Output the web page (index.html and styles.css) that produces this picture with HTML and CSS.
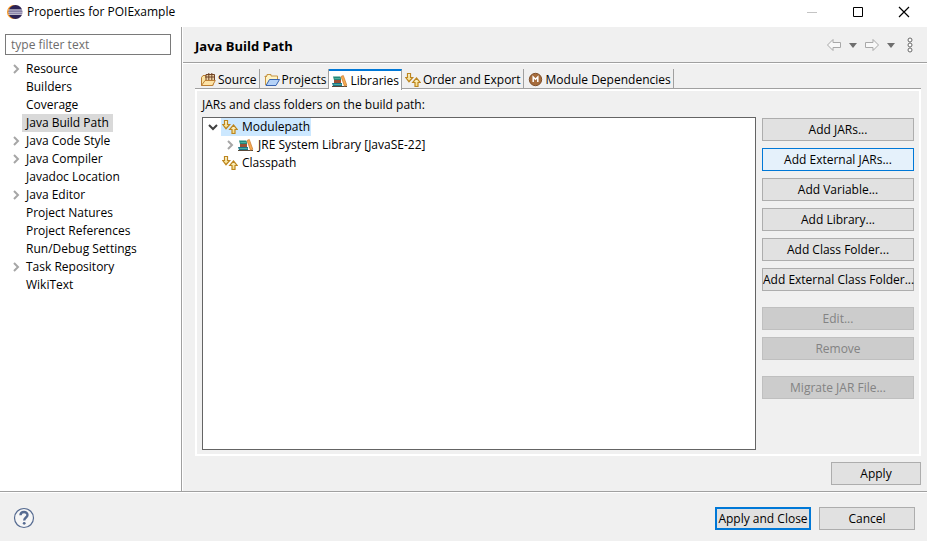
FILE: index.html
```html
<!DOCTYPE html>
<html lang="en">
<head>
    <meta charset="UTF-8">
    <meta name="viewport" content="width=device-width, initial-scale=1.0">
    <title>Properties for POIExample</title>
    <link rel="stylesheet" href="styles.css">
</head>
<body>

<!-- shared icons -->
<svg class="sprite" aria-hidden="true">
    <defs>
        <linearGradient id="gold" x1="0" y1="0" x2="0" y2="1">
            <stop offset="0" stop-color="#fffbe0"/>
            <stop offset="1" stop-color="#f5d878"/>
        </linearGradient>
    </defs>
    <symbol id="chevron" viewBox="0 0 8 10">
        <path d="M2 1 L6 5 L2 9" fill="none" stroke="#a6a6a6" stroke-width="2"/>
    </symbol>
    <symbol id="chevron-open" viewBox="0 0 10 8">
        <path d="M1 2 L5 6 L9 2" fill="none" stroke="#404040" stroke-width="2"/>
    </symbol>
    <symbol id="path-arrows" viewBox="0 0 16 16">
        <path d="M2.5 1.5 H5.5 V5.5 H7.7 L4 9.7 L0.7 5.5 H2.5 Z" fill="url(#gold)" stroke="#bd8620" stroke-width="1.2"/>
        <path d="M11.5 6 L15.3 10.5 H13 V14.5 H10 V10.5 H7.7 Z" fill="url(#gold)" stroke="#bd8620" stroke-width="1.2"/>
    </symbol>
    <symbol id="books" viewBox="0 0 16 16">
        <path d="M1 3.5 H8 L9 4.5 V7 H2 Z" fill="#23877a"/>
        <path d="M2 7 H9 V10 H2 Z" fill="#9c5034"/>
        <path d="M0 10 H10 V13 H1 Z" fill="#1b7589"/>
        <path d="M2.5 5.5 H8.5 M1.5 11.5 H9.5" stroke="#4fae9d"/>
        <path d="M0 13.5 H15" stroke="#574838"/>
        <path d="M9 3.5 L11.3 2.5 L14.8 12.3 L12.5 13.2 Z" fill="#f6ac52" stroke="#c7772b" stroke-width=".7"/>
    </symbol>
</svg>

<header class="titlebar">
    <svg class="logo" viewBox="0 0 16 16">
        <circle cx="7" cy="8" r="7" fill="#f7941e"/>
        <circle cx="8.5" cy="8" r="7" fill="#2c2255"/>
        <path d="M1.5 6 H15.5 M1.3 8.2 H15.7 M1.5 10.2 H15.5" stroke="#fff" stroke-width="1"/>
        <path d="M2 7 H15 M2 9.2 H15" stroke="#9c95bd" stroke-width="1"/>
    </svg>
    <h1 class="window-title">Properties for POIExample</h1>
    <div class="window-buttons">
        <button class="window-button" aria-label="Minimize">
            <svg viewBox="0 0 12 12"><path d="M1 6.5 H11" stroke="#c4c4c4"/></svg>
        </button>
        <button class="window-button" aria-label="Maximize">
            <svg viewBox="0 0 12 12"><path d="M1.5 1.5 H10.5 V10.5 H1.5 Z" fill="none" stroke="#000"/></svg>
        </button>
        <button class="window-button" aria-label="Close">
            <svg viewBox="0 0 12 12"><path d="M1 1 L11 11 M11 1 L1 11" stroke="#000" stroke-width="1.2"/></svg>
        </button>
    </div>
</header>

<div class="main">
    <nav class="sidebar">
        <input class="filter" type="text" placeholder="type filter text" aria-label="Filter">
        <ul class="categories">
            <li class="category"><svg class="chevron"><use href="#chevron"/></svg><span class="name">Resource</span></li>
            <li class="category"><span class="chevron"></span><span class="name">Builders</span></li>
            <li class="category"><span class="chevron"></span><span class="name">Coverage</span></li>
            <li class="category"><span class="chevron"></span><span class="name active">Java Build Path</span></li>
            <li class="category"><svg class="chevron"><use href="#chevron"/></svg><span class="name">Java Code Style</span></li>
            <li class="category"><svg class="chevron"><use href="#chevron"/></svg><span class="name">Java Compiler</span></li>
            <li class="category"><span class="chevron"></span><span class="name">Javadoc Location</span></li>
            <li class="category"><svg class="chevron"><use href="#chevron"/></svg><span class="name">Java Editor</span></li>
            <li class="category"><span class="chevron"></span><span class="name">Project Natures</span></li>
            <li class="category"><span class="chevron"></span><span class="name">Project References</span></li>
            <li class="category"><span class="chevron"></span><span class="name">Run/Debug Settings</span></li>
            <li class="category"><svg class="chevron"><use href="#chevron"/></svg><span class="name">Task Repository</span></li>
            <li class="category"><span class="chevron"></span><span class="name">WikiText</span></li>
        </ul>
    </nav>

    <main class="page">
        <div class="page-header">
            <h2 class="page-title">Java Build Path</h2>
            <div class="history">
                <button class="tool" aria-label="Back">
                    <svg width="16" height="14" viewBox="0 0 16 14"><path d="M1.5 7 L7 1.5 V4.5 H14.5 V9.5 H7 V12.5 Z" fill="#f8f8f8" stroke="#a8a8a8"/></svg>
                </button>
                <button class="tool" aria-label="Back history">
                    <svg width="8" height="5" viewBox="0 0 8 5"><path d="M0 0 H8 L4 5 Z" fill="#6e6e6e"/></svg>
                </button>
                <button class="tool" aria-label="Forward">
                    <svg width="16" height="14" viewBox="0 0 16 14"><path d="M14.5 7 L9 1.5 V4.5 H1.5 V9.5 H9 V12.5 Z" fill="#f8f8f8" stroke="#a8a8a8"/></svg>
                </button>
                <button class="tool" aria-label="Forward history">
                    <svg width="8" height="5" viewBox="0 0 8 5"><path d="M0 0 H8 L4 5 Z" fill="#6e6e6e"/></svg>
                </button>
                <button class="tool menu" aria-label="Menu">
                    <svg width="6" height="16" viewBox="0 0 6 16"><g fill="#fff" stroke="#686868"><circle cx="3" cy="3" r="2"/><circle cx="3" cy="8" r="2"/><circle cx="3" cy="13" r="2"/></g></svg>
                </button>
            </div>
        </div>

        <div class="page-body">
            <div class="tabs" role="tablist">
                <button class="tab" role="tab">
                    <svg class="icon" viewBox="0 0 16 16">
                        <path d="M1.5 13.5 V5.5 L3 3.5 H6 L7 5 H13 V13.5 Z" fill="#fbe3a0" stroke="#b77b34"/>
                        <path d="M6 2.5 H14.5 V8.5 H6 Z" fill="#ecd2a4" stroke="#704326"/>
                        <path d="M8.8 1 V8 M11.8 1 V8 M5 5 H15" stroke="#704326"/>
                        <path d="M1.5 13.5 L5 8.5 H15.3 L12.5 13.5 Z" fill="#fde3a6" stroke="#bd7f35"/>
                    </svg>
                    Source
                </button>
                <button class="tab" role="tab">
                    <svg class="icon" viewBox="0 0 16 16">
                        <path d="M1.5 13 V4 H3 V2.5 H7 V4 H13.5 V8" fill="#fff3c4" stroke="#c69544"/>
                        <path d="M0.5 4.5 H3" stroke="#c69544"/>
                        <path d="M2 13.5 L5.5 7.5 H15.5 L12 13.5 Z" fill="#b5d2f7" stroke="#3863b0"/>
                    </svg>
                    Projects
                </button>
                <button class="tab selected" role="tab" aria-selected="true">
                    <svg class="icon"><use href="#books"/></svg>
                    Libraries
                </button>
                <button class="tab" role="tab">
                    <svg class="icon"><use href="#path-arrows"/></svg>
                    Order and Export
                </button>
                <button class="tab" role="tab">
                    <svg class="icon" viewBox="0 0 16 16">
                        <circle cx="7.5" cy="7.5" r="6.2" fill="#a66c3c" stroke="#80502c"/>
                        <path d="M5.2 10 V5 L7.5 7.2 L9.8 5 V10" fill="none" stroke="#fff" stroke-width="1.5"/>
                    </svg>
                    Module Dependencies
                </button>
            </div>

            <div class="panel" role="tabpanel">
                <p class="caption">JARs and class folders on the build path:</p>
                <div class="columns">
                    <ul class="tree">
                        <li class="node"><svg class="chevron open"><use href="#chevron-open"/></svg><span class="node-label active"><svg class="icon"><use href="#path-arrows"/></svg>Modulepath</span></li>
                        <li class="node child"><svg class="chevron"><use href="#chevron"/></svg><span class="node-label"><svg class="icon"><use href="#books"/></svg>JRE System Library [JavaSE-22]</span></li>
                        <li class="node"><span class="chevron open"></span><span class="node-label"><svg class="icon"><use href="#path-arrows"/></svg>Classpath</span></li>
                    </ul>
                    <div class="actions">
                        <button class="btn">Add JARs...</button>
                        <button class="btn hot">Add External JARs...</button>
                        <button class="btn">Add Variable...</button>
                        <button class="btn">Add Library...</button>
                        <button class="btn">Add Class Folder...</button>
                        <button class="btn">Add External Class Folder...</button>
                        <button class="btn group" disabled>Edit...</button>
                        <button class="btn" disabled>Remove</button>
                        <button class="btn group" disabled>Migrate JAR File...</button>
                    </div>
                </div>
            </div>

            <div class="apply-row">
                <button class="btn apply">Apply</button>
            </div>
        </div>
    </main>
</div>

<footer class="footer">
    <button class="help" aria-label="Help">
        <svg width="22" height="22" viewBox="0 0 22 22">
            <circle cx="11" cy="11" r="9.5" fill="#f6f6f6" stroke="#566b91" stroke-width="1.2"/>
            <path d="M7.5 8.2 C7.5 4 14.5 4 14.5 8 C14.5 10.5 11.2 10.6 11.2 13.5" fill="none" stroke="#566b91" stroke-width="2.4"/>
            <circle cx="11.2" cy="16.3" r="1.4" fill="#566b91"/>
        </svg>
    </button>
    <button class="btn default">Apply and Close</button>
    <button class="btn">Cancel</button>
</footer>

</body>
</html>
```
FILE: styles.css
```css
* {
    box-sizing: border-box;
}

body {
    margin: 0;
    height: 100vh;
    display: flex;
    flex-direction: column;
    background-color: #fff;
    color: #000;
    font-family: "Open Sans", "Noto Sans", sans-serif;
    font-size: 12px;
    line-height: 18px;
}

button, input {
    font: inherit;
    color: inherit;
}

ul {
    list-style: none;
    margin: 0;
    padding: 0;
}

svg {
    display: block;
    flex: none;
}

.sprite {
    position: absolute;
    width: 0;
    height: 0;
}

.icon {
    width: 16px;
    height: 16px;
}

/* title bar */
.titlebar {
    display: flex;
    align-items: center;
    height: 27px;
    padding: 0 0 4px 7px;
}

.logo {
    width: 16px;
    height: 16px;
}

.window-title {
    margin: 0 0 0 4px;
    font-size: 12px;
    font-weight: normal;
}

.window-buttons {
    display: flex;
    margin-left: auto;
}

.window-button {
    width: 46px;
    padding: 0;
    border: none;
    background: none;
}

.window-button svg {
    width: 12px;
    height: 12px;
    margin: 0 auto;
}

/* layout */
.main {
    flex: 1;
    display: flex;
    min-height: 0;
}

.sidebar {
    width: 182px;
    flex: none;
    padding: 7px 10px 0 5px;
    border-right: 1px solid #a0a0a0;
}

.filter {
    display: block;
    width: 100%;
    height: 21px;
    padding: 0 5px;
    border: 1px solid #7a7a7a;
    border-radius: 0;
    background-color: #fff;
}

.filter::placeholder {
    color: #6d6d6d;
    opacity: 1;
}

.categories {
    padding-top: 5px;
}

.category {
    display: flex;
    align-items: center;
    height: 18px;
    padding-left: 7px;
}

.chevron {
    width: 8px;
    height: 10px;
    flex: none;
}

.chevron.open {
    width: 10px;
    height: 8px;
}

.name {
    margin-left: 2px;
    padding: 0 4px;
}

.name.active {
    background-color: #d9d9d9;
}

.page {
    flex: 1;
    display: flex;
    flex-direction: column;
    min-width: 0;
    border-left: 1px solid #fff;
    background-color: #f0f0f0;
}

.page-header {
    display: flex;
    align-items: center;
    justify-content: space-between;
    height: 37px;
    padding: 0 14px 0 12px;
    border-bottom: 1px solid #fff;
    box-shadow: inset 0 -1px #a0a0a0;
}

.page-title {
    margin: 0;
    padding-top: 2px;
    font-size: 13px;
    font-weight: bold;
}

.history {
    display: flex;
    align-items: center;
    gap: 7px;
}

.tool {
    padding: 0;
    border: none;
    background: none;
}

.tool.menu {
    margin-left: 5px;
}

.page-body {
    flex: 1;
    display: flex;
    flex-direction: column;
    padding: 5px 6px 6px 12px;
}

/* tabs */
.tabs {
    display: flex;
    height: 20px;
}

.tab {
    display: flex;
    align-items: center;
    gap: 2px;
    padding: 2px 2px 0 4px;
    border: none;
    border-right: 1px solid #a0a0a0;
    background: none;
    white-space: nowrap;
}

.tab:first-child {
    padding-left: 5px;
}

.tab.selected {
    height: 21px;
    padding: 0 2px 0 3px;
    border-top: 2px solid #0078d7;
    background-color: #fff;
    z-index: 1;
}

.tab.selected + .tab {
    padding-left: 3px;
}

.panel {
    flex: 1;
    display: flex;
    flex-direction: column;
    padding: 5px 5px 4px;
    border: 2px solid #fff;
    box-shadow: 0 -1px #a0a0a0;
}

.caption {
    margin: 0 0 3px;
}

.columns {
    flex: 1;
    display: flex;
    gap: 6px;
}

.tree {
    flex: 1;
    border: 1px solid #646464;
    background-color: #fff;
}

.node {
    display: flex;
    align-items: center;
    gap: 3px;
    height: 18px;
    padding-left: 5px;
}

.node.child {
    padding-left: 23px;
}

.node-label {
    display: flex;
    align-items: center;
    gap: 4px;
    padding: 0 1px;
}

.node-label.active {
    background-color: #cce8ff;
}

/* buttons */
.actions {
    display: flex;
    flex-direction: column;
    gap: 7px;
    width: 152px;
    padding-top: 1px;
}

.btn {
    height: 23px;
    padding: 0;
    border: 1px solid #adadad;
    background-color: #e1e1e1;
    line-height: 21px;
    text-align: center;
    white-space: nowrap;
}

.btn:hover, .btn.hot {
    border-color: #0078d7;
    background-color: #e5f1fb;
}

.btn:disabled {
    border-color: #bfbfbf;
    background-color: #ccc;
    color: #838383;
}

.btn.group {
    margin-top: 9px;
}

.btn.default {
    border: 2px solid #0078d7;
    line-height: 19px;
}

.apply-row {
    display: flex;
    justify-content: flex-end;
    padding-top: 6px;
}

.apply {
    width: 90px;
}

.footer {
    display: flex;
    align-items: center;
    gap: 8px;
    height: 50px;
    padding: 3px 12px 0 13px;
    border-top: 1px solid #a0a0a0;
    box-shadow: inset 0 1px #fff;
    background-color: #f0f0f0;
}

.footer .btn {
    width: 96px;
}

.help {
    margin-right: auto;
    padding: 0;
    border: none;
    background: none;
}
```
